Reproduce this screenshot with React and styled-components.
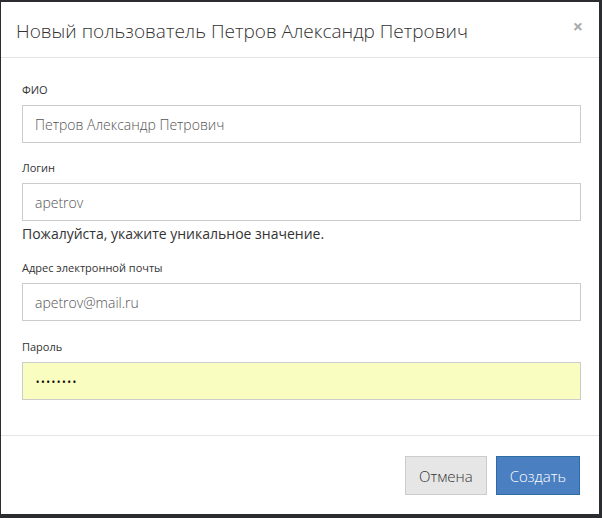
import React from "react";
import styled, { createGlobalStyle } from "styled-components";

const Global = createGlobalStyle`
  html, body { margin: 0; padding: 0; background: #2b2d30; }
  body { font-family: "Open Sans", "Noto Sans", sans-serif; }
`;

const Backdrop = styled.div`
  width: 602px; height: 518px; box-sizing: border-box;
  padding: 2px 3px 4px 1px; background: #2a2c2f;
`;
const Modal = styled.div`
  background: #fff; height: 100%; display: flex; flex-direction: column;
`;
const Header = styled.div`
  height: 56px; box-sizing: border-box; border-bottom: 1px solid #e5e5e5;
  display: flex; align-items: center; justify-content: space-between;
  padding: 0 16px 0 15px;
`;
const Title = styled.h4`
  margin: 0; font-size: 19px; font-weight: 300; color: #333;
  position: relative; top: 1px;
`;
const Close = styled.span`
  font-size: 18px; font-weight: 700; color: #aaa; align-self: flex-start; margin-top: 12px;
`;
const Body = styled.div`
  padding: 24px 18px 0 21px; flex: 1; border-bottom: 1px solid #e5e5e5;
`;
const Group = styled.div` margin-bottom: ${p => p.$mb || 17}px; `;
const Label = styled.div`
  font-size: 11px; color: #333; margin-bottom: 8px; line-height: 15px;
`;
const Input = styled.input`
  display: block; width: 100%; box-sizing: border-box; height: 38px;
  border: 1px solid #ccc; background: ${p => p.$auto ? "#fafdc0" : "#fff"};
  font-family: inherit; font-size: 14px; font-weight: 300; color: ${p => p.$auto ? "#000" : "#555"};
  padding: 0 12px; outline: none;
`;
const Help = styled.div` font-size: 14px; color: #333; margin-top: 4px; line-height: 18px; `;
const Footer = styled.div`
  height: 78px; display: flex; justify-content: flex-end; align-items: flex-start;
  padding: 20px 19px 0 0; gap: 9px; box-sizing: border-box;
`;
const Button = styled.button`
  height: 39px; padding: 0 13px; font-family: inherit; font-size: 15px; font-weight: 300;
  border: 1px solid ${p => p.$primary ? "#2e6da4" : "#ccc"};
  background: ${p => p.$primary ? "#4a7fc1" : "#e6e6e6"};
  color: ${p => p.$primary ? "#fff" : "#333"};
`;

export default function App() {
  return (
    <>
      <Global />
      <Backdrop>
        <Modal>
          <Header>
            <Title>Новый пользователь Петров Александр Петрович</Title>
            <Close>×</Close>
          </Header>
          <Body>
            <Group>
              <Label>ФИО</Label>
              <Input defaultValue="Петров Александр Петрович" />
            </Group>
            <Group>
              <Label>Логин</Label>
              <Input defaultValue="apetrov" />
              <Help>Пожалуйста, укажите уникальное значение.</Help>
            </Group>
            <Group $mb={18}>
              <Label>Адрес электронной почты</Label>
              <Input defaultValue="apetrov@mail.ru" />
            </Group>
            <Group>
              <Label>Пароль</Label>
              <Input $auto type="password" defaultValue="password" />
            </Group>
          </Body>
          <Footer>
            <Button>Отмена</Button>
            <Button $primary>Создать</Button>
          </Footer>
        </Modal>
      </Backdrop>
    </>
  );
}
